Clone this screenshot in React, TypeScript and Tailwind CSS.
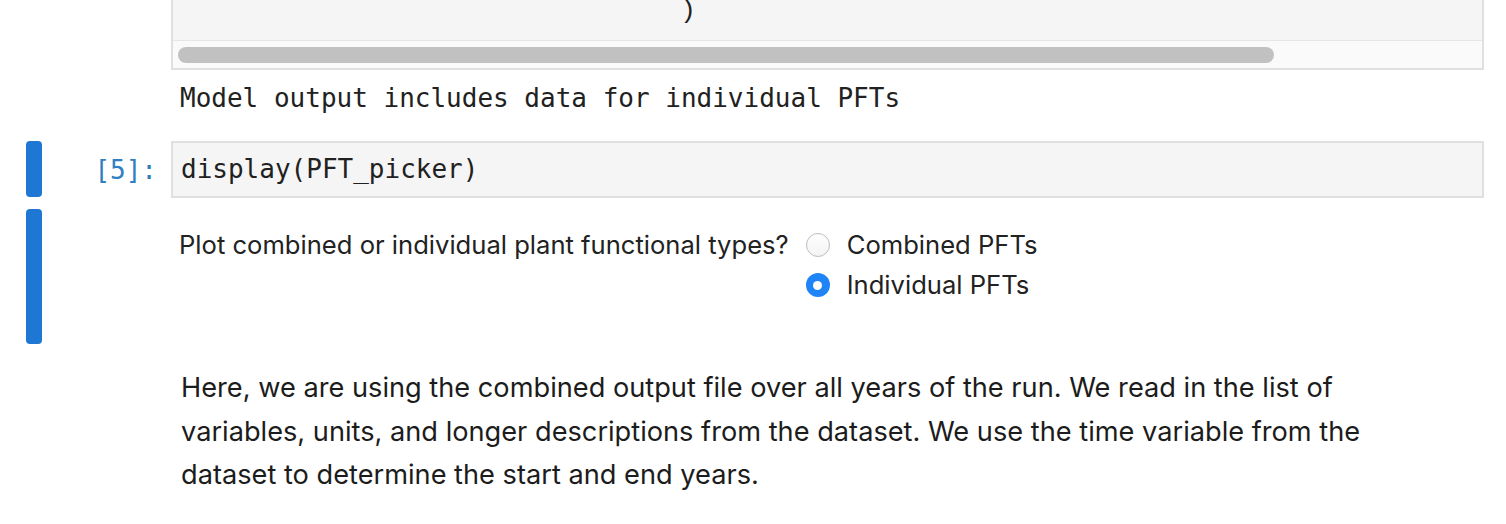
import React from "react"

const mono = "font-['DejaVu_Sans_Mono',monospace]"
const sans = "font-['Inter',sans-serif]"

function Bar({ className }: { className?: string }) {
    return <div className={`w-[16px] shrink-0 rounded-[4px] bg-[#1e77d3] ${className ?? ""}`} />
}

function Radio({ checked, label }: { checked?: boolean; label: string }) {
    return (
        <div className="flex h-[40px] items-center">
            {checked ? (
                <span className="flex size-[24px] items-center justify-center rounded-full bg-[#1f85f7]">
                    <span className="size-[9px] rounded-full bg-white" />
                </span>
            ) : (
                <span className="size-[24px] rounded-full border border-[#bdbdbd] bg-gradient-to-b from-white to-[#f4f4f4]" />
            )}
            <span className="ml-[17px] text-[25.6px] text-[#222]">{label}</span>
        </div>
    )
}

export default function App() {
    return (
        <div className={`h-[524px] w-[1506px] overflow-hidden bg-white ${sans}`}>
            {/* previous cell (scrolled) */}
            <div className="flex">
                <div className="w-[171px] shrink-0" />
                <div className="w-[1313px]">
                    <div className="border-x-2 border-b-2 border-[#e0e0e0]">
                        <div className={`flex h-[41px] items-start border-b-[1px] border-[#e6e6e6] bg-[#f5f5f5] px-[8px] ${mono}`}>
                            <pre className="-mt-[2px] text-[26px] leading-[26px] text-[#212121]">{"                                )"}</pre>
                        </div>
                        <div className="h-[27px] bg-[#fafafa] pt-[6px] pl-[5px]">
                            <div className="h-[16px] w-[1096px] rounded-full bg-[#c1c1c1]" />
                        </div>
                    </div>
                    <div className={`mt-[10px] pl-[9px] text-[26px] leading-[36px] text-[#212121] ${mono}`}>
                        Model output includes data for individual PFTs
                    </div>
                </div>
            </div>

            {/* [5] input */}
            <div className="mt-[25px] flex">
                <Bar className="ml-[26px] h-[56px]" />
                <div className={`w-[129px] shrink-0 pr-[14px] pt-[11px] text-right text-[26px] leading-[36px] text-[#307fc1] ${mono}`}>
                    [5]:
                </div>
                <div className={`flex h-[57px] w-[1313px] items-center border-2 border-[#e0e0e0] bg-[#f5f5f5] px-[8px] text-[26px] text-[#212121] ${mono}`}>
                    display(PFT_picker)
                </div>
            </div>

            {/* widget output */}
            <div className="mt-[11px] flex">
                <Bar className="ml-[26px] h-[135px]" />
                <div className="w-[129px] shrink-0" />
                <div className="flex pt-[16px] pl-[8px]">
                    <div className="flex h-[40px] items-center pr-[17px] text-[25.6px] text-[#222]">
                        Plot combined or individual plant functional types?
                    </div>
                    <div className="flex flex-col">
                        <Radio label="Combined PFTs" />
                        <Radio checked label="Individual PFTs" />
                    </div>
                </div>
            </div>

            {/* markdown */}
            <div className="mt-[22px] flex">
                <div className="w-[171px] shrink-0" />
                <p className="pl-[10px] text-[27.2px] leading-[43.5px] text-[#1c1c1c]">
                    Here, we are using the combined output file over all years of the run. We read in the list of
                    <br />
                    variables, units, and longer descriptions from the dataset. We use the time variable from the
                    <br />
                    dataset to determine the start and end years.
                </p>
            </div>
        </div>
    )
}
